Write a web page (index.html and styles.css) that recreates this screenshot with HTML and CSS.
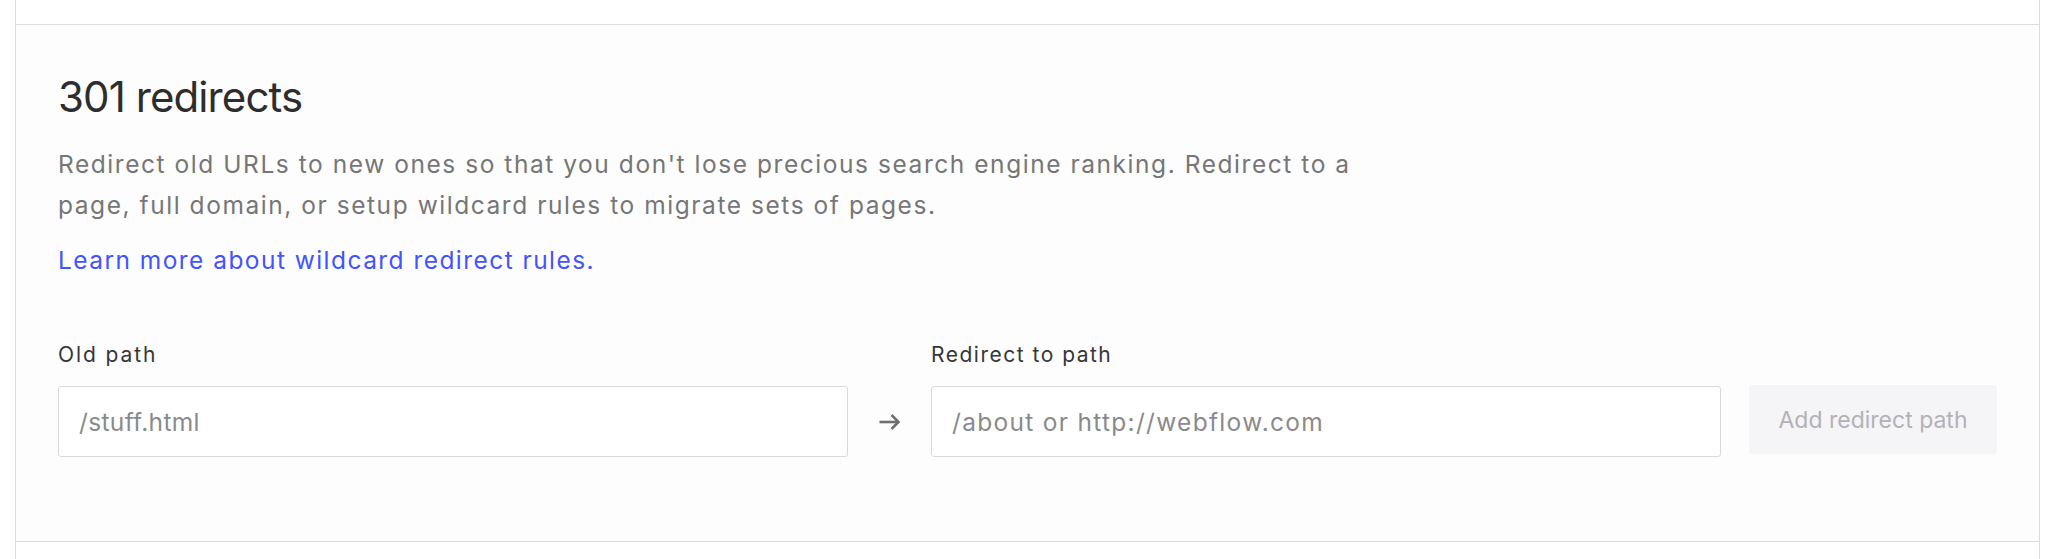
FILE: index.html
```html
<!DOCTYPE html>
<html lang="en">
<head>
<meta charset="utf-8">
<title>301 redirects</title>
<link rel="stylesheet" href="styles.css">
</head>
<body>
<div class="panel">
  <section class="redirects">
    <h2 class="title">301 redirects</h2>
    <p class="desc">Redirect old URLs to new ones so that you don't lose precious search engine ranking. Redirect to a page, full domain, or setup wildcard rules to migrate sets of pages.</p>
    <a class="link" href="#">Learn more about wildcard redirect rules.</a>
    <div class="fields">
      <label class="label label-old" for="old">Old path</label>
      <label class="label label-new" for="new">Redirect to path</label>
      <input class="input input-old" id="old" type="text" placeholder="/stuff.html">
      <div class="arrow">
        <svg width="22" height="16" viewBox="0 0 22 16" fill="none" stroke="#6e6e6e" stroke-width="2.6" stroke-linecap="butt" stroke-linejoin="miter">
          <path d="M0.5 8H19.5"/>
          <path d="M12.5 1L19.5 8L12.5 15"/>
        </svg>
      </div>
      <input class="input input-new" id="new" type="text" placeholder="/about or http://webflow.com">
      <button class="add-btn" type="button">Add redirect path</button>
    </div>
  </section>
</div>
</body>
</html>
```

FILE: styles.css
```css
html, body {
  margin: 0;
  padding: 0;
  background: #ffffff;
}

body {
  font-family: Inter, "Noto Sans", "Liberation Sans", sans-serif;
  height: 559px;
  overflow: hidden;
}

.panel {
  margin: 0 8px 0 15px;
  border-left: 1px solid #dcdcde;
  border-right: 1px solid #dcdcde;
  padding-top: 24px;
  min-height: 535px;
}

.redirects {
  border-top: 1px solid #dcdcde;
  border-bottom: 1px solid #dcdcde;
  background: #fdfdfd;
  padding: 47px 42px 84px 42px;
}

.title {
  margin: 0;
  font-size: 42px;
  line-height: 50px;
  font-weight: 400;
  letter-spacing: -0.9px;
  color: #2d2d2f;
}

.desc {
  margin: 22px 0 0;
  max-width: 1320px;
  font-size: 24.5px;
  line-height: 40.7px;
  letter-spacing: 1.55px;
  color: #767676;
}

.link {
  display: inline-block;
  margin-top: 14.6px;
  font-size: 24.5px;
  line-height: 40.7px;
  letter-spacing: 1.45px;
  color: #4353ff;
  text-decoration: none;
}

.fields {
  margin-top: 60px;
  display: grid;
  grid-template-columns: 1fr 83px 1fr 276px;
  grid-template-rows: auto 71px;
}

.label {
  font-size: 21px;
  line-height: 28px;
  letter-spacing: 1.5px;
  color: #363638;
  margin-bottom: 17.6px;
}

.label-old { grid-column: 1; grid-row: 1; letter-spacing: 1.9px; }
.label-new { grid-column: 3; grid-row: 1; }

.input {
  box-sizing: border-box;
  height: 71px;
  width: 100%;
  margin: 0;
  border: 1px solid #d9d9db;
  border-radius: 3px;
  background: #ffffff;
  padding: 0 20px;
  font-family: inherit;
  font-size: 24.5px;
  color: #333;
  outline: none;
}

.input::placeholder {
  color: #8a8a8c;
  opacity: 1;
}

.input-old { grid-column: 1; grid-row: 2; letter-spacing: 0.35px; }
.input-new { grid-column: 3; grid-row: 2; letter-spacing: 1.3px; }

.arrow {
  grid-column: 2;
  grid-row: 2;
  display: flex;
  align-items: center;
  justify-content: center;
  padding-top: 1px;
}

.add-btn {
  grid-column: 4;
  grid-row: 2;
  justify-self: end;
  align-self: start;
  margin-top: -1px;
  width: 248px;
  height: 69px;
  border: none;
  border-radius: 3px;
  background: #f5f4f7;
  color: #b3b1b7;
  font-family: inherit;
  font-size: 23px;
  font-weight: 400;
  padding: 0;
}
```
